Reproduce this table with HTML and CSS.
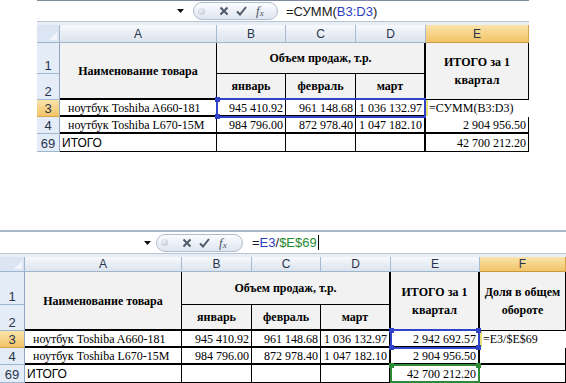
FILE: index.html
```html
<!DOCTYPE html>
<html lang="ru">
<head>
<meta charset="utf-8">
<link rel="stylesheet" href="styles.css">
</head>
<body>
<section class="sheet sheet-a">
  <div class="fbar">
    <div class="namebox"><svg class="arrow" width="7" height="4" viewBox="0 0 7 4"><path d="M0 0h7L3.5 4z" fill="#111"/></svg></div>
    <div class="pill">
      <span class="dot"></span>
      <svg class="ic ic-x" width="10" height="10" viewBox="0 0 10 10"><path d="M1.5 1.5l7 7M8.5 1.5l-7 7" stroke="#4d5869" stroke-width="2"/></svg>
      <svg class="ic ic-ok" width="11" height="10" viewBox="0 0 11 10"><path d="M1 5.5l3 3 6-7.5" stroke="#4d5869" stroke-width="2" fill="none"/></svg>
      <span class="fx">f<sub>x</sub></span>
    </div>
    <div class="ftext">=СУММ(<span class="ref-b">B3:D3</span>)</div>
  </div>
  <div class="spacer"></div>
  <div class="grid grid-a">
    <div class="corner"></div>
    <div class="ch">A</div><div class="ch">B</div><div class="ch">C</div><div class="ch">D</div><div class="ch sel">E</div>

    <div class="rh r1">1</div>
    <div class="cell hd a12">Наименование товара</div>
    <div class="cell hd bd1">Объем продаж, т.р.</div>
    <div class="cell hd tot thl e12">ИТОГО за 1<br>квартал</div>
    <div class="rh r2">2</div>
    <div class="cell hd b2 tb">январь</div>
    <div class="cell hd c2 tb">февраль</div>
    <div class="cell hd d2 tb">март</div>

    <div class="rh sel">3</div>
    <div class="cell tb txt">ноутбук Toshiba A660-181</div>
    <div class="cell num tb">945 410.92</div>
    <div class="cell num tb">961 148.68</div>
    <div class="cell num tb thr">1 036 132.97</div>
    <div class="cell edit">=СУММ(B3:D3)</div>

    <div class="rh">4</div>
    <div class="cell tb txt">ноутбук Toshiba L670-15M</div>
    <div class="cell num tb">984 796.00</div>
    <div class="cell num tb">872 978.40</div>
    <div class="cell num tb thr">1 047 182.10</div>
    <div class="cell num tb">2 904 956.50</div>

    <div class="rh">69</div>
    <div class="cell sans">ИТОГО</div>
    <div class="cell"></div>
    <div class="cell"></div>
    <div class="cell thr"></div>
    <div class="cell num">42 700 212.20</div>

    <div class="refbox blue a-ref"><i class="h tl"></i><i class="h bl"></i></div>
  </div>
</section>

<section class="sheet sheet-b">
  <div class="fbar">
    <div class="namebox"><svg class="arrow" width="7" height="4" viewBox="0 0 7 4"><path d="M0 0h7L3.5 4z" fill="#111"/></svg></div>
    <div class="pill">
      <span class="dot"></span>
      <svg class="ic ic-x" width="10" height="10" viewBox="0 0 10 10"><path d="M1.5 1.5l7 7M8.5 1.5l-7 7" stroke="#4d5869" stroke-width="2"/></svg>
      <svg class="ic ic-ok" width="11" height="10" viewBox="0 0 11 10"><path d="M1 5.5l3 3 6-7.5" stroke="#4d5869" stroke-width="2" fill="none"/></svg>
      <span class="fx">f<sub>x</sub></span>
    </div>
    <div class="ftext">=<span class="ref-b">E3</span>/<span class="ref-g">$E$69</span><span class="caret"></span></div>
  </div>
  <div class="spacer"></div>
  <div class="grid grid-b">
    <div class="corner"></div>
    <div class="ch">A</div><div class="ch">B</div><div class="ch">C</div><div class="ch">D</div><div class="ch">E</div><div class="ch sel">F</div>

    <div class="rh r1">1</div>
    <div class="cell hd a12">Наименование товара</div>
    <div class="cell hd bd1 thr">Объем продаж, т.р.</div>
    <div class="cell hd tot thr e12">ИТОГО за 1<br>квартал</div>
    <div class="cell hd tot f12">Доля в общем<br>обороте</div>
    <div class="rh r2">2</div>
    <div class="cell hd b2 tb">январь</div>
    <div class="cell hd c2 tb">февраль</div>
    <div class="cell hd d2 tb thr">март</div>

    <div class="rh sel">3</div>
    <div class="cell tb txt">ноутбук Toshiba A660-181</div>
    <div class="cell num tb">945 410.92</div>
    <div class="cell num tb">961 148.68</div>
    <div class="cell num tb thr">1 036 132.97</div>
    <div class="cell num tb thr">2 942 692.57</div>
    <div class="cell edit">=E3/$E$69</div>

    <div class="rh">4</div>
    <div class="cell tb txt">ноутбук Toshiba L670-15M</div>
    <div class="cell num tb">984 796.00</div>
    <div class="cell num tb">872 978.40</div>
    <div class="cell num tb thr">1 047 182.10</div>
    <div class="cell num tb thr">2 904 956.50</div>
    <div class="cell tb"></div>

    <div class="rh">69</div>
    <div class="cell sans">ИТОГО</div>
    <div class="cell"></div>
    <div class="cell"></div>
    <div class="cell thr"></div>
    <div class="cell num thr">42 700 212.20</div>
    <div class="cell"></div>

    <div class="refbox blue b-ref"><i class="h tl"></i><i class="h bl"></i><i class="h tr"></i><i class="h br"></i></div>
    <div class="refbox green g-ref"><i class="h tl"></i><i class="h tr"></i></div>
  </div>
</section>
</body>
</html>
```

FILE: styles.css
```css
html, body {
  margin: 0;
  padding: 0;
}
body {
  width: 566px;
  height: 383px;
  overflow: hidden;
  background: #fff;
  font-family: "Liberation Serif", "Times New Roman", serif;
  color: #000;
}

.sheet-a {
  margin-left: 37px;
  width: 492px;
}
.sheet-b {
  margin-top: 78px;
  width: 566px;
}

/* formula bar */
.fbar {
  display: flex;
  align-items: center;
  height: 22px;
  box-sizing: border-box;
  border-top: 1px solid #7e8ba0;
  border-bottom: 1px solid #b7c4d6;
  background: #fff;
}
.sheet-b .fbar {
  height: 24px;
  border-top: 2px solid #a9b8cc;
}
.namebox {
  display: flex;
  justify-content: flex-end;
  align-items: center;
  width: 150px;
  padding-right: 3px;
  box-sizing: border-box;
}
.sheet-b .namebox {
  width: 153px;
  padding-right: 2px;
}
.pill {
  display: flex;
  align-items: center;
  height: 18px;
  width: 85px;
  box-sizing: border-box;
  margin-left: 6px;
  padding-left: 4px;
  border: 1px solid #b1bdcf;
  border-radius: 10px;
  background: linear-gradient(#fbfcfe, #dfe6f0);
}
.sheet-b .pill {
  margin-left: 3px;
  width: 87px;
}
.dot {
  width: 7px;
  height: 7px;
  border-radius: 50%;
  background: radial-gradient(circle at 40% 35%, #eef1f5, #b9c1cc);
}
.ic-x { margin-left: 14px; }
.ic-ok { margin-left: 7px; }
.fx {
  margin-left: 9px;
  font-family: "Liberation Serif", serif;
  font-style: italic;
  font-size: 13px;
  color: #4a5567;
  line-height: 1;
}
.fx sub {
  font-size: 9px;
  vertical-align: -1px;
}
.ftext {
  margin-left: 8px;
  font-family: "Liberation Sans", Arial, sans-serif;
  font-size: 13px;
  color: #1a1a1a;
  display: flex;
  align-items: center;
}
.sheet-b .ftext { margin-left: 9px; }
.ref-b { color: #2a3ec4; }
.ref-g { color: #1f8a2e; }
.caret {
  display: inline-block;
  width: 1px;
  height: 15px;
  background: #000;
  margin-left: 1px;
}
.spacer {
  height: 3px;
  background: #e9eef5;
}

/* grid */
.grid {
  display: grid;
  position: relative;
}
.grid-a {
  grid-template-columns: 23px 157px 69px 70px 70px 103px;
  grid-template-rows: 18px 31px 26px 17px 17px 18px;
}
.grid-b {
  grid-template-columns: 25px 157px 70px 69px 70px 89px 86px;
  grid-template-rows: 15px 33px 26px 17px 17px 18px;
}

.corner {
  background: #dbe5f3;
  border-right: 1px solid #9eb6ce;
  border-bottom: 1px solid #9eb6ce;
  position: relative;
}
.corner::after {
  content: "";
  position: absolute;
  right: 2px;
  bottom: 2px;
  border-left: 8px solid transparent;
  border-bottom: 8px solid #f3f6fa;
}
.ch {
  display: flex;
  align-items: center;
  justify-content: center;
  background: linear-gradient(#f7f9fc, #dbe3ee);
  border-right: 1px solid #a7bad0;
  border-bottom: 1px solid #9eb6ce;
  font-family: "Liberation Sans", Arial, sans-serif;
  font-size: 12px;
  color: #27344c;
  line-height: 1;
}
.ch.sel {
  background: linear-gradient(#fae3aa, #f2c467);
  border-right-color: #d9a24c;
  border-bottom-color: #c99a46;
}
.rh {
  display: flex;
  align-items: flex-end;
  justify-content: center;
  padding-bottom: 1px;
  box-sizing: border-box;
  background: #e4ecf7;
  border-right: 1px solid #8fa5c0;
  border-bottom: 1px solid #9eb6ce;
  font-family: "Liberation Sans", Arial, sans-serif;
  font-size: 13px;
  color: #27344c;
  line-height: 1;
}
.rh.sel {
  background: linear-gradient(#fae3aa, #f2c467);
  border-bottom-color: #d9a24c;
}
.rh.r1 { grid-row: 2; grid-column: 1; }
.rh.r2 { grid-row: 3; grid-column: 1; }

.cell {
  display: flex;
  align-items: center;
  box-sizing: border-box;
  border-right: 1px solid #000;
  border-bottom: 1px solid #000;
  font-size: 12px;
  white-space: nowrap;
  overflow: hidden;
  padding: 0 2px;
  line-height: 1;
}
.hd {
  background: #f2f2f2;
  font-weight: bold;
  justify-content: center;
  text-align: center;
}
.tot {
  white-space: normal;
  line-height: 18px;
}
.a12 { grid-row: 2 / span 2; grid-column: 2; border-bottom-width: 2px; }
.grid-a .bd1 { grid-row: 2; grid-column: 3 / span 3; border-right-width: 2px; }
.grid-b .bd1 { grid-row: 2; grid-column: 3 / span 3; }
.e12 { grid-row: 2 / span 2; grid-column: 6; }
.f12 { grid-row: 2 / span 2; grid-column: 7; }
.b2 { grid-row: 3; grid-column: 3; }
.c2 { grid-row: 3; grid-column: 4; }
.grid-a .d2 { grid-row: 3; grid-column: 5; border-right-width: 2px; }
.grid-b .d2 { grid-row: 3; grid-column: 5; }

.tb { border-bottom-width: 2px; }
.thr { border-right-width: 2px; }
.num { justify-content: flex-end; }
.txt { padding-left: 8px; }
.sans {
  font-family: "Liberation Sans", Arial, sans-serif;
  font-size: 12px;
  padding-left: 2px;
}
.edit {
  background: #fff;
  border-right-color: transparent;
  border-bottom-color: #fff;
  box-shadow: inset 2px 0 0 #e9e27a;
  padding-left: 3px;
  overflow: visible;
}

/* reference highlights drawn over cells */
.refbox {
  position: absolute;
  box-sizing: border-box;
  border: 2px solid #2f43c8;
  pointer-events: none;
}
.refbox.green { border-color: #2c8a36; }
.a-ref { grid-row: 4 / 5; grid-column: 3 / 6; top: -2px; left: -1px; right: 0; bottom: -1px; }
.b-ref { grid-row: 4 / 5; grid-column: 6 / 7; top: -2px; left: -1px; right: 0; bottom: -1px; }
.g-ref { grid-row: 6 / 7; grid-column: 6 / 7; top: -1px; left: -1px; right: 0; bottom: 0; }
.h {
  position: absolute;
  width: 5px;
  height: 5px;
  background: #2f43c8;
}
.green .h { background: #2c8a36; }
.h.tl { left: -3px; top: -3px; }
.h.bl { left: -3px; bottom: -3px; }
.h.tr { right: -3px; top: -3px; }
.h.br { right: -3px; bottom: -3px; }
```
